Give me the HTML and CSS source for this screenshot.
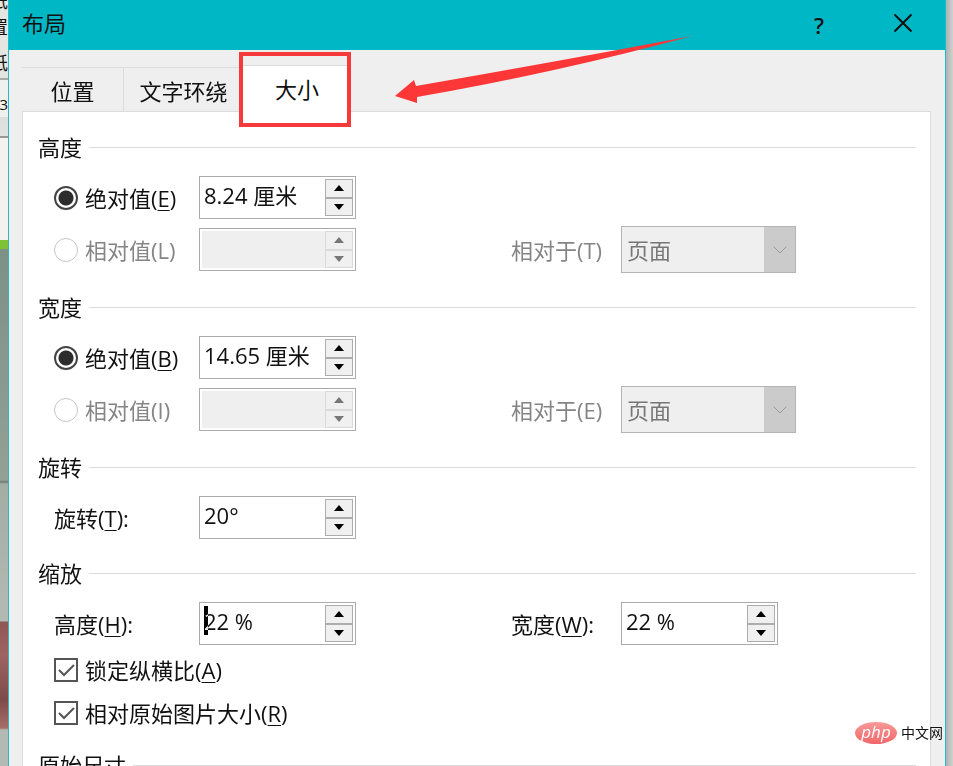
FILE: index.html
```
<!DOCTYPE html>
<html lang="zh-CN">

	<head>
		<meta charset="UTF-8">
		<title>布局</title>
		<link rel="stylesheet" href="styles.css">
	</head>

	<body>
		<div class="doc doc-left">
			<span class="bit">纸</span>
			<span class="bit">置</span>
			<span class="bit gap">纸</span>
			<span class="bit small">3</span>
		</div>
		<form class="dialog">
			<div class="titlebar">
				<h1>布局</h1>
				<button type="button" class="help" aria-label="帮助">?</button>
				<button type="button" aria-label="关闭">
					<svg width="20" height="20" viewBox="0 0 20 20"><path d="M1.5 1.5L18.5 18.5M18.5 1.5L1.5 18.5" /></svg>
				</button>
			</div>
			<div class="content">
				<div class="tabs">
					<button type="button" class="tab">位置</button>
					<button type="button" class="tab wide">文字环绕</button>
					<div class="current">
						<button type="button" class="tab active">大小</button>
						<svg class="arrow" width="300" height="70" viewBox="0 0 300 70"><path d="M0 60L19 44L21 50Q165 25 297 0Q165 36 22 61L22 67Z" /></svg>
					</div>
				</div>
				<div class="panel">
					<!-- 高度 -->
					<div class="group">
						<h2>高度</h2>
						<div class="row">
							<label class="name"><input type="radio" name="height" checked>绝对值(<u>E</u>)</label>
							<div class="spin">
								<input type="text" value="8.24 厘米" aria-label="高度绝对值">
								<button type="button" class="up" aria-label="增加"></button>
								<button type="button" class="down" aria-label="减少"></button>
							</div>
						</div>
						<div class="row">
							<label class="name off"><input type="radio" name="height" disabled>相对值(L)</label>
							<div class="spin off">
								<input type="text" aria-label="高度相对值" disabled>
								<button type="button" class="up" aria-label="增加" disabled></button>
								<button type="button" class="down" aria-label="减少" disabled></button>
							</div>
							<label class="off" for="height-base">相对于(T)</label>
							<div class="drop">
								<select id="height-base" disabled>
									<option>页面</option>
								</select>
								<svg width="16" height="10" viewBox="0 0 16 10"><path d="M1.5 1.5L8 8L14.5 1.5" /></svg>
							</div>
						</div>
					</div>
					<!-- 宽度 -->
					<div class="group">
						<h2>宽度</h2>
						<div class="row">
							<label class="name"><input type="radio" name="width" checked>绝对值(<u>B</u>)</label>
							<div class="spin">
								<input type="text" value="14.65 厘米" aria-label="宽度绝对值">
								<button type="button" class="up" aria-label="增加"></button>
								<button type="button" class="down" aria-label="减少"></button>
							</div>
						</div>
						<div class="row">
							<label class="name off"><input type="radio" name="width" disabled>相对值(I)</label>
							<div class="spin off">
								<input type="text" aria-label="宽度相对值" disabled>
								<button type="button" class="up" aria-label="增加" disabled></button>
								<button type="button" class="down" aria-label="减少" disabled></button>
							</div>
							<label class="off" for="width-base">相对于(E)</label>
							<div class="drop">
								<select id="width-base" disabled>
									<option>页面</option>
								</select>
								<svg width="16" height="10" viewBox="0 0 16 10"><path d="M1.5 1.5L8 8L14.5 1.5" /></svg>
							</div>
						</div>
					</div>
					<!-- 旋转 -->
					<div class="group">
						<h2>旋转</h2>
						<div class="row">
							<label for="rotate">旋转(<u>T</u>):</label>
							<div class="spin">
								<input type="text" id="rotate" value="20°">
								<button type="button" class="up" aria-label="增加"></button>
								<button type="button" class="down" aria-label="减少"></button>
							</div>
						</div>
					</div>
					<!-- 缩放 -->
					<div class="group">
						<h2>缩放</h2>
						<div class="row">
							<label for="scale-h">高度(<u>H</u>):</label>
							<div class="spin focus">
								<input type="text" id="scale-h" value="22 %">
								<button type="button" class="up" aria-label="增加"></button>
								<button type="button" class="down" aria-label="减少"></button>
							</div>
							<label for="scale-w">宽度(<u>W</u>):</label>
							<div class="spin">
								<input type="text" id="scale-w" value="22 %">
								<button type="button" class="up" aria-label="增加"></button>
								<button type="button" class="down" aria-label="减少"></button>
							</div>
						</div>
						<label class="name check">
							<span class="box"><input type="checkbox" checked><svg width="24" height="24" viewBox="0 0 24 24"><path d="M5 12L10 17L20 7" /></svg></span>锁定纵横比(<u>A</u>)
						</label>
						<label class="name check">
							<span class="box"><input type="checkbox" checked><svg width="24" height="24" viewBox="0 0 24 24"><path d="M5 12L10 17L20 7" /></svg></span>相对原始图片大小(<u>R</u>)
						</label>
					</div>
					<div class="group">
						<h2>原始尺寸</h2>
					</div>
				</div>
			</div>
		</form>
		<div class="doc doc-right"></div>
		<div class="logo"><span class="php">php</span>中文网</div>
	</body>

</html>
```

FILE: styles.css
```
* {
	box-sizing: border-box;
}

body {
	display: flex;
	height: 100vh;
	margin: 0;
	overflow: hidden;
	color: #111;
	font-family: "Open Sans", "Noto Sans CJK SC", sans-serif;
	font-size: 22px;
	line-height: 32px;
}

input,
select,
button {
	margin: 0;
	padding: 0;
	border: 0;
	border-radius: 0;
	background: none;
	color: inherit;
	font: inherit;
}

h1,
h2 {
	margin: 0;
	font-size: 22px;
	font-weight: normal;
}

u {
	text-decoration-thickness: 1px;
	text-underline-offset: 3px;
}

/*对话框后面的文档*/
.doc {
	flex: none;
	width: 8px;
	overflow: hidden;
}

.doc-left {
	display: flex;
	flex-direction: column;
	align-items: flex-end;
	background: linear-gradient(#e5e5e2 78px, #aaa 78px, #aaa 80px, #f0f0ef 80px, #f0f0ef 117px, #ddd 117px, #e2e2e0 136px, #999 136px, #999 138px, #f3f2ee 138px, #f3f2ee 240px, #7fc236 240px, #7fc236 249px, #7d9186 249px, #93a096 480px, #6f7b74 482px, #a3ada4 484px, #b3bab3 621px, #8e5654 622px, #9d6462 655px, #7e4b4a 700px, #a86e69 728px, #b3bab3 730px);
}

.doc-right {
	width: 7px;
	background: linear-gradient(90deg, #aab5b4, #d0d1ce);
}

.bit {
	flex: none;
	height: 26px;
	font-size: 18px;
	line-height: 26px;
	margin-top: -12px;
}

.bit + .bit {
	margin-top: 0;
}

.bit + .gap {
	margin-top: 10px;
}

.bit.small {
	font-size: 15px;
	height: 56px;
	line-height: 56px;
}

.dialog {
	flex: 1;
	min-width: 0;
	border: solid #20bdc8;
	border-width: 0 1px;
	background: #efefef;
}

.titlebar {
	display: flex;
	height: 50px;
	padding-left: 13px;
	background: #00b7c6;
}

.titlebar h1 {
	flex: 1;
	line-height: 46px;
}

.titlebar button {
	width: 84px;
	line-height: 46px;
}

.titlebar .help {
	font-weight: 600;
}

.titlebar svg {
	display: block;
	margin: -4px auto 0;
}

svg {
	fill: none;
	stroke: #111;
	stroke-width: 2;
}

.content {
	padding: 15px 14px 0 13px;
}

/*选项卡*/
.tabs {
	display: flex;
	align-items: flex-end;
}

.tab {
	width: 102px;
	height: 44px;
	border-top: 1px solid #dcdcdc;
	border-right: 1px solid #dcdcdc;
	line-height: 46px;
}

.tab.wide {
	width: 119px;
	border-right: 0;
}

.current {
	position: relative;
	margin-bottom: -1px;
}

.tab.active {
	display: block;
	width: 108px;
	height: 47px;
	border-right: 0;
	background: #fff;
}

/*红色框*/
.current::after {
	content: '';
	position: absolute;
	box-sizing: border-box;
	top: -13px;
	left: -4px;
	width: 112px;
	height: 75px;
	border: 4px solid #f63a3c;
}

.arrow {
	position: absolute;
	top: -29px;
	left: 152px;
	fill: #fd3637;
	stroke: none;
}

.panel {
	padding: 19px 14px 0 15px;
	border: 1px solid #dcdcdc;
	background: #fff;
}

.group {
	display: flex;
	flex-direction: column;
	gap: 7px;
	margin-bottom: 18px;
}

.group h2 {
	display: flex;
	align-items: center;
	gap: 7px;
	margin-bottom: 6px;
}

.group h2::after {
	content: '';
	flex: 1;
	height: 1px;
	background: #dcdcdc;
}

.row {
	display: grid;
	grid-template-columns: 145px 312px 110px 175px;
	align-items: center;
	padding-left: 16px;
}

.name {
	display: flex;
	align-items: center;
}

.off {
	color: #858585;
}

input[type=radio] {
	flex: none;
	appearance: none;
	width: 24px;
	height: 24px;
	margin-right: 7px;
	border: 2px solid #444;
	border-radius: 50%;
}

input[type=radio]:checked {
	background: radial-gradient(circle, #2c2c2c 7px, #fff 8px);
}

input[type=radio]:disabled {
	border: 1px solid #c4c4c4;
}

.check {
	height: 36px;
	padding-left: 16px;
}

.box {
	position: relative;
	width: 24px;
	height: 24px;
	margin-right: 7px;
}

.box input {
	display: block;
	appearance: none;
	width: 24px;
	height: 24px;
	border: 2px solid #555;
}

.box svg {
	position: absolute;
	top: 0;
	left: 0;
	stroke: #555;
	pointer-events: none;
}

/*数字框*/
.spin {
	position: relative;
	display: grid;
	grid-template-columns: 1fr 28px;
	grid-template-rows: 1fr 1fr;
	width: 157px;
	height: 43px;
	padding: 2px;
	border: 1px solid #ababab;
	background: #fff;
}

.spin input {
	grid-row: 1 / 3;
	min-width: 0;
	padding: 0 0 5px 2px;
}

.spin.off input {
	background: #efefef;
}

.spin button {
	display: flex;
	align-items: center;
	justify-content: center;
	border: 1px solid #adadad;
	background: #f0f0f0;
}

.spin button::after {
	content: '';
	border: 5px solid transparent;
}

.spin .up::after {
	border-top-width: 0;
	border-bottom: 6px solid #000;
}

.spin .down::after {
	border-bottom-width: 0;
	border-top: 6px solid #000;
}

.spin.off button {
	border-color: #dadada;
}

.spin.off .up::after {
	border-bottom-color: #777;
}

.spin.off .down::after {
	border-top-color: #777;
}

/*光标，压住的文字反白*/
.spin.focus::after {
	content: '';
	position: absolute;
	top: 3px;
	left: 4px;
	width: 4px;
	height: 29px;
	background: #fff;
	mix-blend-mode: difference;
}

.drop {
	position: relative;
}

.drop select {
	display: block;
	appearance: none;
	width: 100%;
	height: 47px;
	padding-left: 5px;
	border: 1px solid #b4b4b4;
	background: linear-gradient(#cbcbcb, #cbcbcb) right / 31px 100% no-repeat #efefef;
	color: #777;
	opacity: 1;
}

.drop svg {
	position: absolute;
	top: 19px;
	right: 8px;
	stroke: #999;
	stroke-width: 1;
}

/*水印*/
.logo {
	display: flex;
	align-items: center;
	gap: 4px;
	position: fixed;
	right: 10px;
	bottom: 22px;
	height: 22px;
	font-size: 14px;
	line-height: 22px;
}

.php {
	width: 42px;
	height: 22px;
	border-radius: 50%;
	background: linear-gradient(#f79a98, #f2666a);
	color: #fff;
	font-size: 17px;
	font-style: italic;
	line-height: 19px;
	text-align: center;
}
```
